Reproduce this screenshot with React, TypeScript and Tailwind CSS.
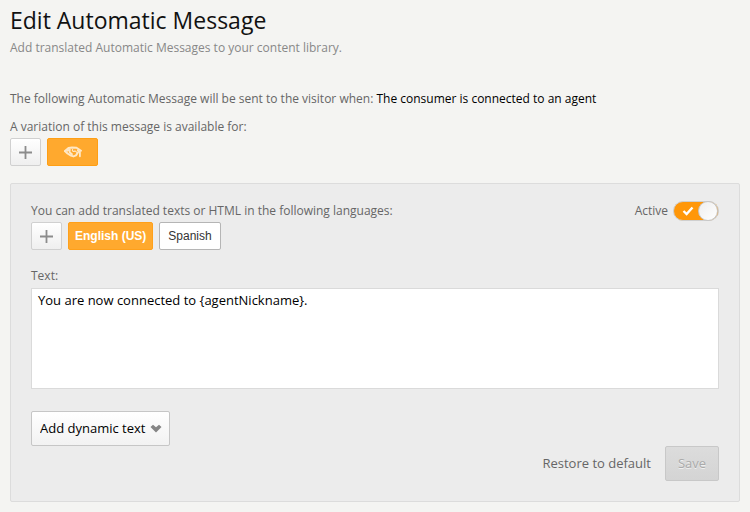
import { useState } from "react";

function PlusButton({ label }: { label: string }) {
  return (
    <button
      type="button"
      aria-label={label}
      className="flex h-7 w-[31px] items-center justify-center rounded-xs border border-[#d0d0d0] bg-linear-to-b from-white to-[#efefef]"
    >
      <svg viewBox="0 0 13 13" className="size-[13px]" aria-hidden="true">
        <path d="M6.500 0v13M0 6.500h13" stroke="#8c8c8c" strokeWidth="1.800" fill="none" />
      </svg>
    </button>
  );
}

function HandshakeIcon() {
  return (
    <svg
      viewBox="0 0 18 12"
      className="h-3 w-[18px]"
      fill="none"
      stroke="#ffe8c6"
      strokeLinecap="round"
      strokeLinejoin="round"
      aria-hidden="true"
    >
      <path d="M1 5 4.500 2 8 1.400l4.500.3L17 4.800" strokeWidth="2" />
      <path d="M1.200 5.200 3.500 7.500 7 9.600 9.500 10.400 12 9.400 13.500 7" strokeWidth="2" />
      <path d="M3.500 4.800 5.800 3.200 5.600 6.200 8 8.200" strokeWidth="1.800" />
      <path d="M8.500 3.500c-.4 1.500.8 2.600 2.500 1.400l2.500 2" strokeWidth="1.200" />
      <path d="M15.900 5.500v4.800M13.800 4.200l1.200 2" strokeWidth="1.800" />
    </svg>
  );
}

export default function App() {
  const [active, setActive] = useState(true);
  const [language, setLanguage] = useState("English (US)");
  const [text, setText] = useState("You are now connected to {agentNickname}.");

  return (
    <main className="min-h-screen bg-[#f4f4f2] px-[10px] pt-1 pb-[10px] font-['Open_Sans',sans-serif] text-xs leading-4 text-[#666]">
      <h1 className="text-[23px] leading-8 text-[#111]">Edit Automatic Message</h1>
      <p className="mt-1 text-[#888]">Add translated Automatic Messages to your content library.</p>

      <p className="mt-[35px]">
        The following Automatic Message will be sent to the visitor when:{" "}
        <span className="text-black">The consumer is connected to an agent</span>
      </p>
      <p className="mt-3">A variation of this message is available for:</p>
      <div className="mt-[3px] flex gap-[6px]">
        <PlusButton label="Add variation" />
        <button
          type="button"
          aria-label="Connected to agent"
          className="flex h-7 w-[51px] items-center justify-center rounded-xs border border-[#ff9f14] bg-[#ffa92e]"
        >
          <HandshakeIcon />
        </button>
      </div>

      <section className="mt-[17px] rounded-xs border border-[#dcdcdc] bg-[#ececec] px-5 pt-[19px] pb-5">
        <div className="flex items-center justify-between">
          <p>You can add translated texts or HTML in the following languages:</p>
          <label className="flex h-4 items-center gap-[5px]">
            Active
            <input
              type="checkbox"
              checked={active}
              onChange={(event) => setActive(event.target.checked)}
              className="peer sr-only"
            />
            <span className="flex h-5 w-[46px] items-center justify-end rounded-full border border-[#cfcfcf] bg-[#ccc] peer-checked:bg-[#ff9709] peer-focus-visible:outline-2">
              <svg viewBox="0 0 12 10" className="mr-1 h-[10px] w-3" fill="none" aria-hidden="true">
                <path d="M1.500 5 4.600 8 10.500 1.500" stroke="#fff" strokeWidth="2.400" />
              </svg>
              <span className="size-5 rounded-full border border-[#c8c8c8] bg-linear-to-br from-[#eee] to-white" />
            </span>
          </label>
        </div>

        <div className="mt-[3px] flex gap-[6px] font-['Liberation_Sans',Arial,sans-serif]">
          <PlusButton label="Add language" />
          {["English (US)", "Spanish"].map((name) => (
            <button
              key={name}
              type="button"
              aria-pressed={language === name}
              onClick={() => setLanguage(name)}
              className={
                language === name
                  ? "h-7 rounded-xs border border-[#ffa01a] bg-[#ffa92e] px-[6px] font-bold text-white"
                  : "h-7 rounded-xs border border-[#b5b5b5] bg-white px-2 text-[#333]"
              }
            >
              {name}
            </button>
          ))}
        </div>

        <label htmlFor="message" className="mt-[18px] block">
          Text:
        </label>
        <textarea
          id="message"
          value={text}
          onChange={(event) => setText(event.target.value)}
          className="mt-1 block h-[101px] w-full resize-none border border-[#dadada] bg-white px-[6px] py-[3px] text-[13px] leading-4 text-black"
        />

        <div className="mt-[22px] grid w-[139px] items-center">
          <select
            aria-label="Add dynamic text"
            className="col-start-1 row-start-1 h-[35px] w-full appearance-none rounded-xs border border-[#c6c6c6] bg-linear-to-b from-white to-[#f2f2f2] pb-[2px] pl-2 text-[13px] text-black"
          >
            <option>Add dynamic text</option>
            <option>Agent nickname</option>
          </select>
          <svg
            viewBox="0 0 12 9"
            className="pointer-events-none col-start-1 row-start-1 mr-2 h-[9px] w-3 justify-self-end"
            aria-hidden="true"
          >
            <path d="M0.500 3 3 0.700 6 3.200 9 0.700 11.500 3 6 8.500z" fill="#858585" />
          </svg>
        </div>

        <div className="flex items-center justify-end gap-[14px] text-[13px]">
          <button type="button" className="pb-[2px]">
            Restore to default
          </button>
          <button
            type="button"
            disabled
            className="h-[35px] w-[54px] rounded-xs border border-[#c8c8c8] bg-linear-to-b from-[#dcdcdc] to-[#d4d4d4] pb-[2px] text-[#aaa] text-shadow-[0_1px_0_#f0f0f0]"
          >
            Save
          </button>
        </div>
      </section>
    </main>
  );
}
